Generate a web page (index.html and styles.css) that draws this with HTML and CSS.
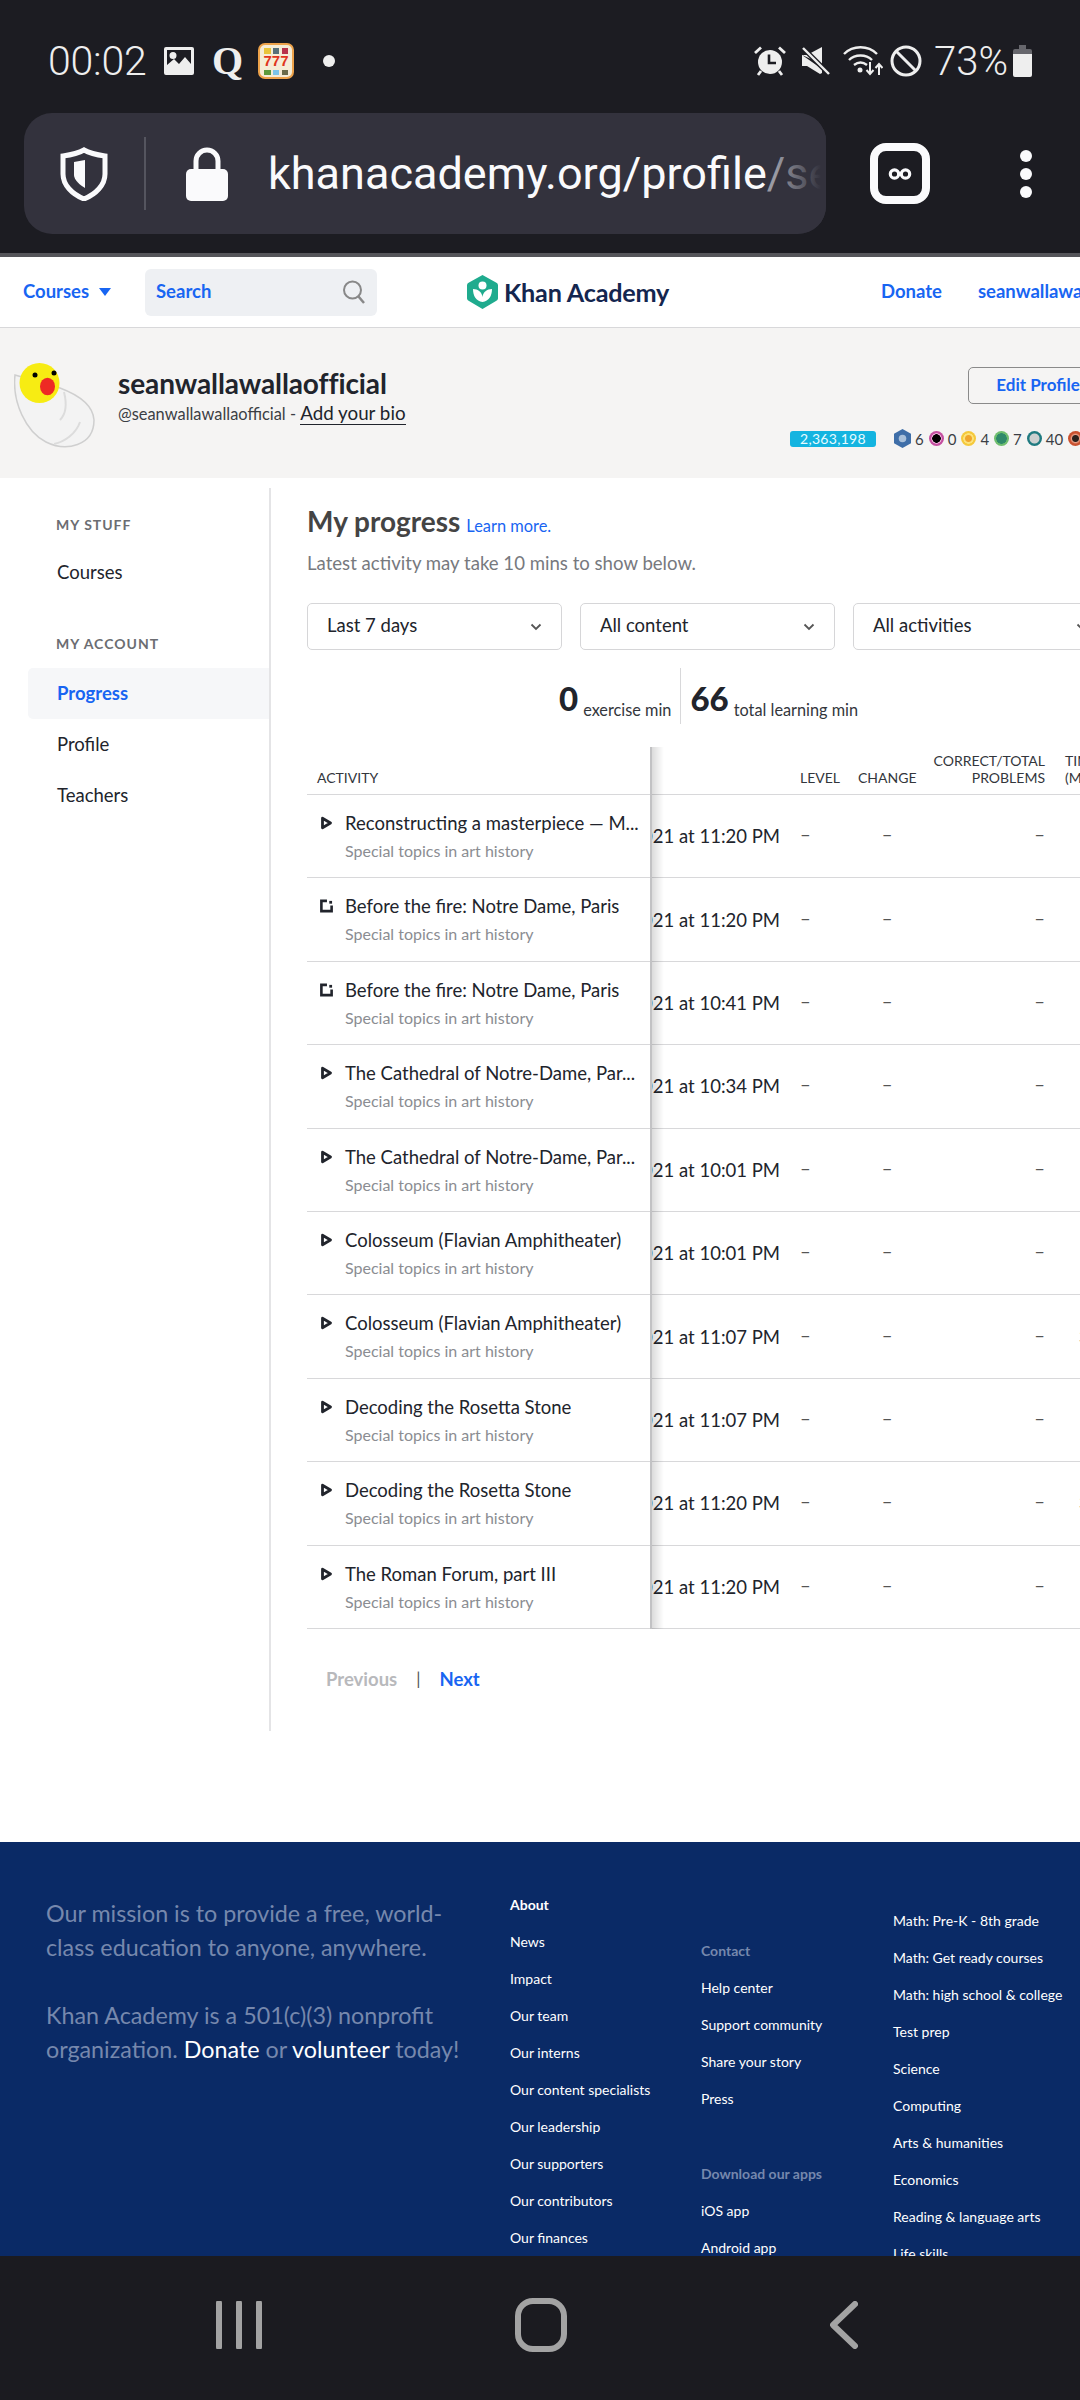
FILE: index.html
```html
<!DOCTYPE html><html lang="en"><head><meta charset="utf-8">
<meta name="viewport" content="width=device-width,initial-scale=1">
<title>Khan Academy · My progress</title>
<link rel="stylesheet" href="styles.css">
</head>

<body>
<svg class="sprite" width="0" height="0">
  <symbol id="play" viewBox="0 0 12 14"><path d="M2 2.200 10 7 2 11.800Z" fill="none" stroke="#21242c" stroke-width="2.800" stroke-linejoin="round"/></symbol>
  <symbol id="doc" viewBox="0 0 14 14"><path d="M7.500 1.500H1.500V12.500H12.500V6.500" fill="none" stroke="#21242c" stroke-width="2.800"/><path d="M10 1.500h3V4.500H10Z" fill="#21242c"/></symbol>
  <symbol id="chev" viewBox="0 0 12 8"><path d="M1.500 1.500 6 6l4.500-4.500" fill="none" stroke="#555" stroke-width="1.800"/></symbol>
</svg>

<!-- phone status bar -->
<div class="status">
  <div class="status-left">
    <span class="clock">00:02</span>
    <svg class="ic-photo" viewBox="0 0 30 28"><path fill="#eee" fill-rule="evenodd" d="M2 0H28a2 2 0 0 1 2 2V26a2 2 0 0 1-2 2H2a2 2 0 0 1-2-2V2A2 2 0 0 1 2 0ZM3 3V18L10 12 15 17 21 10 27 17V3ZM9 5a3.500 3.500 0 1 1 0 7 3.500 3.500 0 0 1 0-7Z"/></svg>
    <span class="ic-q">Q</span>
    <svg class="ic-slots" viewBox="0 0 36 36">
      <rect x="1" y="1" width="34" height="34" rx="6" fill="#f5ecd6" stroke="#eda24a" stroke-width="2"/>
      <rect x="6" y="5" width="7" height="6" fill="#e8c43a"/><rect x="15" y="5" width="6" height="6" fill="#56707a"/><rect x="24" y="5" width="6" height="6" fill="#b8324a"/>
      <text x="18" y="23" class="slots-text">777</text>
      <rect x="6" y="27" width="7" height="5" fill="#5c9a3c"/><rect x="15" y="27" width="6" height="5" fill="#7cc4e8"/><rect x="24" y="27" width="6" height="5" fill="#6b6b4a"/>
    </svg>
    <span class="status-dot"></span>
  </div>
  <div class="status-right">
    <svg class="ic-alarm" viewBox="0 0 34 30"><path d="M2 7 8 1.500M32 7 26 1.500M8 25 5 29M26 25l3 4" stroke="#eee" stroke-width="2.800" fill="none"/><circle cx="17" cy="16" r="12" fill="#eee"/><path d="M16 8.500V17H23" stroke="#1c1c22" stroke-width="2.600" fill="none"/></svg>
    <svg class="ic-mute" viewBox="0 0 28 28"><path fill="#eee" d="M0 8H5L20 0V17ZM0 8V19H5L18 27 20 26V22Z"/><path d="M2 2 27 27" stroke="#1c1c22" stroke-width="5"/><path d="M1 1 27 27" stroke="#eee" stroke-width="2.400"/></svg>
    <svg class="ic-wifi" viewBox="0 0 40 32"><g fill="none" stroke="#eee" stroke-width="2.400"><path d="M1 9C10 0 25 0 34 9"/><path d="M6 15c6-6 17-6 23 0"/><path d="M11 20c4-3 9-3 13 0"/></g><circle cx="17" cy="25" r="2.500" fill="#eee"/><path d="M27 17v12M23.500 25l3.500 4 3.500-4M36 30V19M32.500 23l3.500-4 3.500 4" fill="none" stroke="#eee" stroke-width="2"/></svg>
    <svg class="ic-block" viewBox="0 0 32 32"><circle cx="16" cy="16" r="14" fill="none" stroke="#eee" stroke-width="3"/><path d="M6 6 26 26" stroke="#eee" stroke-width="3"/></svg>
    <span class="batt-text">73%</span>
    <svg class="ic-batt" viewBox="0 0 19 32"><path fill="#66666c" d="M6 0h7v4h4a2 2 0 0 1 2 2v6H0V6a2 2 0 0 1 2-2h4Z"/><path fill="#eee" d="M0 9H19V30a2 2 0 0 1-2 2H2a2 2 0 0 1-2-2Z"/></svg>
  </div>
</div>

<!-- browser toolbar -->
<div class="toolbar">
  <div class="urlbar">
    <svg class="ic-shield" viewBox="0 0 48 54"><path d="M24 3C31 7 38 8 45 9V27C45 38 36 47 24 52 12 47 3 38 3 27V9C10 8 17 7 24 3Z" fill="none" stroke="#fafafc" stroke-width="5"/><path d="M25 13 14 15V28C14 33 20 38 25 41Z" fill="#fafafc"/></svg>
    <span class="url-sep"></span>
    <svg class="ic-lock" viewBox="0 0 42 54"><path d="M10 24V14a11 11 0 0 1 22 0V24" fill="none" stroke="#fafafc" stroke-width="5"/><rect y="22" width="42" height="32" rx="5" fill="#fafafc"/></svg>
    <span class="url">khanacademy.org/profile<span class="url-dim">/seanwallawallaofficial/progress</span></span>
  </div>
  <div class="tabs-btn"><svg viewBox="0 0 24 12"><circle cx="6.500" cy="6" r="4.200" fill="none" stroke="#fafafc" stroke-width="3.200"/><circle cx="17.500" cy="6" r="4.200" fill="none" stroke="#fafafc" stroke-width="3.200"/></svg></div>
  <div class="kebab"><i></i><i></i><i></i></div>
</div>

<!-- site header -->
<header class="site-head">
  <a class="head-link courses">Courses <span class="caret"></span></a>
  <div class="search">
    <span>Search</span>
    <svg viewBox="0 0 24 24"><circle cx="10.500" cy="10" r="8.500" fill="none" stroke="#888" stroke-width="2"/><path d="M16.500 16.500 22 23" stroke="#888" stroke-width="2.500"/></svg>
  </div>
  <div class="logo">
    <svg viewBox="0 0 31 34"><path d="M15.500 0 29 7.500a3 3 0 0 1 2 3V23a3 3 0 0 1-2 3L15.500 34 2 26a3 3 0 0 1-2-3V10.500a3 3 0 0 1 2-3Z" fill="#1fab8e"/><circle cx="15.500" cy="10.500" r="4" fill="#fff"/><path d="M6 14c5 0 9 3 9.500 8 .5-5 4.500-8 9.500-8 0 7-3 12-9.500 13C9 26 6 21 6 14Z" fill="#fff"/></svg>
    <span>Khan Academy</span>
  </div>
  <a class="head-link donate">Donate</a>
  <a class="head-link user">seanwallawallaofficial</a>
</header>

<!-- profile banner -->
<section class="banner">
  <svg class="avatar" viewBox="0 0 84 88">
    <path d="M1 13C-2 40 12 70 32 80 52 90 80 84 80 58 79 42 62 32 46 26Z" fill="#f3f3f3" stroke="#cfcfcf" stroke-width="1.500"/>
    <path d="M50 30C54 46 50 54 46 58M66 60C62 72 50 80 40 82" fill="none" stroke="#dcdcdc" stroke-width="2"/>
    <circle cx="25.500" cy="21" r="20" fill="#f7ec13"/>
    <circle cx="21" cy="13" r="2.500"/><circle cx="40" cy="11" r="2.500"/>
    <ellipse cx="33.500" cy="24.500" rx="7.500" ry="8.700" fill="#ee2a24"/>
  </svg>
  <div class="who">
    <div class="who-name">seanwallawallaofficial</div>
    <div class="who-sub">@seanwallawallaofficial - <a>Add your bio</a></div>
  </div>
  <div class="who-right">
    <a class="edit-btn">Edit Profile</a>
    <div class="stats-line">
      <span class="points">2,363,198</span>
      <svg class="badge-first" viewBox="0 0 18 20"><path d="M9 0 18 5V15L9 20 0 15V5Z" fill="#3f6ea8"/><circle cx="9" cy="10" r="4" fill="#a9c0da"/></svg><span class="badge-n">6</span>
      <span class="badge b-pink"></span><span class="badge-n">0</span>
      <span class="badge b-sun"></span><span class="badge-n">4</span>
      <span class="badge b-earth"></span><span class="badge-n">7</span>
      <span class="badge b-moon"></span><span class="badge-n">40</span>
      <span class="badge b-red"></span>
    </div>
  </div>
</section>

<div class="main">
  <nav class="side">
    <h4>MY STUFF</h4>
    <a class="side-link">Courses</a>
    <h4 class="second">MY ACCOUNT</h4>
    <a class="side-link on">Progress</a>
    <a class="side-link">Profile</a>
    <a class="side-link">Teachers</a>
  </nav>

  <div class="content">
    <div class="title-line"><h2>My progress</h2> <a>Learn more.</a></div>
    <p class="hint">Latest activity may take 10 mins to show below.</p>

    <div class="filters">
      <div class="select"><span>Last 7 days</span> <svg><use href="#chev"/></svg></div>
      <div class="select"><span>All content</span> <svg><use href="#chev"/></svg></div>
      <div class="select"><span>All activities</span> <svg><use href="#chev"/></svg></div>
    </div>

    <div class="totals">
      <div class="total left"><b>0</b><span>exercise min</span></div>
      <div class="total"><b>66</b><span>total learning min</span></div>
    </div>

    <div class="table">
      <div class="row head">
        <div class="c-name">ACTIVITY</div>
        <div class="c-date"></div>
        <div class="c-level">LEVEL</div>
        <div class="c-change">CHANGE</div>
        <div class="c-correct">CORRECT/TOTAL<br>PROBLEMS</div>
        <div class="c-time">TIME<br>(MIN)</div>
      </div>
      <div id="rows"></div>
    </div>

    <div class="pager"><span class="prev">Previous</span><span class="bar">|</span><a>Next</a></div>
  </div>
</div>

<footer class="foot">
  <div class="mission">
    <p>Our mission is to provide a free, world-class education to anyone, anywhere.</p>
    <p>Khan Academy is a 501(c)(3) nonprofit organization. <a>Donate</a> or <a>volunteer</a> today!</p>
  </div>
  <div class="foot-col col-a">
    <b>About</b><a>News</a><a>Impact</a><a>Our team</a><a>Our interns</a><a>Our content specialists</a><a>Our leadership</a><a>Our supporters</a><a>Our contributors</a><a>Our finances</a>
  </div>
  <div class="foot-col col-b">
    <span class="dim">Contact</span><a>Help center</a><a>Support community</a><a>Share your story</a><a>Press</a>
    <span class="dim gap">Download our apps</span><a>iOS app</a><a>Android app</a>
  </div>
  <div class="foot-col col-c">
    <a>Math: Pre-K - 8th grade</a><a>Math: Get ready courses</a><a>Math: high school &amp; college</a><a>Test prep</a><a>Science</a><a>Computing</a><a>Arts &amp; humanities</a><a>Economics</a><a>Reading &amp; language arts</a><a>Life skills</a>
  </div>
</footer>

<!-- phone nav bar -->
<div class="navbar">
  <svg class="nav-recent" viewBox="0 0 46 48"><path d="M3 2V46M23 2V46M43 2V46" stroke="#a3a3a3" stroke-width="6" stroke-linecap="round"/></svg>
  <svg class="nav-home" viewBox="0 0 52 54"><rect x="3" y="3" width="46" height="48" rx="15" fill="none" stroke="#a3a3a3" stroke-width="6"/></svg>
  <svg class="nav-back" viewBox="0 0 28 48"><path d="M25 3 3 24 25 45" fill="none" stroke="#a3a3a3" stroke-width="6" stroke-linecap="round" stroke-linejoin="round"/></svg>
</div>

<script>
// activity rows: [icon, title, date, time]
const ROWS = [
  ['play', 'Reconstructing a masterpiece — M...', 'Jan 3, 2021 at 11:20 PM', ''],
  ['doc',  'Before the fire: Notre Dame, Paris', 'Jan 3, 2021 at 11:20 PM', ''],
  ['doc',  'Before the fire: Notre Dame, Paris', 'Jan 3, 2021 at 10:41 PM', ''],
  ['play', 'The Cathedral of Notre-Dame, Par...', 'Jan 3, 2021 at 10:34 PM', ''],
  ['play', 'The Cathedral of Notre-Dame, Par...', 'Jan 3, 2021 at 10:01 PM', ''],
  ['play', 'Colosseum (Flavian Amphitheater)', 'Jan 3, 2021 at 10:01 PM', ''],
  ['play', 'Colosseum (Flavian Amphitheater)', 'Jan 2, 2021 at 11:07 PM', '3'],
  ['play', 'Decoding the Rosetta Stone', 'Jan 2, 2021 at 11:07 PM', ''],
  ['play', 'Decoding the Rosetta Stone', 'Jan 2, 2021 at 11:20 PM', '3'],
  ['play', 'The Roman Forum, part III', 'Jan 2, 2021 at 11:20 PM', ''],
];

document.getElementById('rows').innerHTML = ROWS.map(r => `
  <div class="row">
    <div class="c-name">
      <svg class="kind"><use href="#${r[0]}"/></svg>
      <div><div class="act">${r[1]}</div><div class="topic">Special topics in art history</div></div>
    </div>
    <div class="c-date"><span>${r[2]}</span></div>
    <div class="c-level">–</div>
    <div class="c-change">–</div>
    <div class="c-correct">–</div>
    <div class="c-time">${r[3]}</div>
  </div>`).join('');
</script>
</body></html>
```

FILE: styles.css
```css
:root{
  --dark:#1c1c22;
  --blue:#1865f2;
  --ink:#21242c;
  --line:#d8d8da;
  --grey:#8b8d92;
}
*{box-sizing:border-box}
html,body{margin:0;padding:0}
body{
  width:1080px;height:2400px;overflow:hidden;display:flex;flex-direction:column;
  font-family:"Lato","Noto Sans",Arial,sans-serif;color:var(--ink);background:#fff;
}
.sprite{position:absolute}
a{color:inherit;text-decoration:none}

/* ---------- status bar ---------- */
.status{
  flex:none;height:112px;background:var(--dark);padding:43px 48px 0 48px;
  display:flex;justify-content:space-between;align-items:flex-start;
  font-family:"Roboto",sans-serif;color:#eee;
}
.status-left,.status-right{display:flex;align-items:center;height:36px}
.clock{font-size:41px;font-weight:300;width:116px;letter-spacing:-.2px}
.ic-photo{width:30px;height:28px}
.ic-q{font-family:"Liberation Serif",serif;font-weight:700;font-size:40px;margin-left:18px;width:30px;line-height:36px}
.ic-slots{width:36px;height:36px;margin-left:16px}
.slots-text{font:700 15px "Liberation Sans",sans-serif;fill:#e0341c;text-anchor:middle}
.status-dot{width:12px;height:12px;border-radius:50%;background:#eee;margin-left:29px}
.ic-alarm{width:34px;height:30px}
.ic-mute{width:28px;height:28px;margin-left:15px}
.ic-wifi{width:40px;height:32px;margin-left:13px}
.ic-block{width:32px;height:32px;margin-left:7px}
.batt-text{font-size:40px;font-weight:300;margin-left:12px;width:71px;white-space:nowrap}
.ic-batt{width:19px;height:32px;margin-left:8px}

/* ---------- browser toolbar ---------- */
.toolbar{
  flex:none;height:145px;background:var(--dark);border-bottom:4px solid #55555a;
  padding:1px 0 0 24px;display:flex;align-items:flex-start;
}
.urlbar{
  flex:none;width:802px;height:121px;border-radius:28px;background:#33323d;position:relative;overflow:hidden;
  display:flex;align-items:center;padding-left:36px;
}
.urlbar::after{
  content:"";position:absolute;right:0;top:0;bottom:0;width:50px;
  background:linear-gradient(90deg,rgba(51,50,61,0),#33323d 90%);
}
.ic-shield{width:48px;height:54px;flex:none}
.url-sep{width:2px;height:73px;background:#55555f;margin-left:36px;flex:none}
.ic-lock{width:42px;height:54px;margin-left:40px;flex:none}
.url{font-family:"Roboto",sans-serif;font-size:45px;color:#fafafc;margin-left:40px;white-space:nowrap}
.url-dim{color:#9a9aa3}
.tabs-btn{
  flex:none;width:60px;height:61px;margin:30px 0 0 44px;border:8px solid #fafafc;border-radius:16px;
  display:flex;align-items:center;justify-content:center;
}
.tabs-btn svg{width:24px;height:12px}
.kebab{flex:none;margin:37px 0 0 90px;display:flex;flex-direction:column;gap:6px}
.kebab i{display:block;width:12px;height:12px;border-radius:50%;background:#fafafc}

/* ---------- site header ---------- */
.site-head{
  flex:none;height:71px;border-bottom:1px solid var(--line);background:#fff;
  display:flex;align-items:center;padding-left:23px;white-space:nowrap;
}
.site-head > *{flex:none}
.head-link{color:var(--blue);font-size:18.500px;font-weight:700;padding-bottom:2px}
.courses{width:122px}
.caret{display:inline-block;width:0;height:0;margin-left:5px;vertical-align:2px;border:6px solid transparent;border-top:8px solid var(--blue);border-bottom:0}
.search{
  width:232px;height:47px;background:#eef0f3;border-radius:6px;padding:0 11px;
  display:flex;align-items:center;justify-content:space-between;color:var(--blue);font-size:18.500px;font-weight:700;
}
.search span{padding-bottom:2px}
.search svg{width:24px;height:24px}
.logo{display:flex;align-items:center;margin-left:90px;width:414px;color:#14264f;font-size:25.200px;font-weight:700;letter-spacing:-.2px}
.logo svg{width:31px;height:34px;margin-right:6px}
.user{margin-left:36px}

/* ---------- profile banner ---------- */
.banner{flex:none;height:150px;background:#f5f4f3;display:flex;position:relative;padding:34px 0 0 14px;white-space:nowrap}
.avatar{width:84px;height:88px;flex:none}
.who{margin-left:20px;padding-top:3px}
.who-name{font-size:28px;font-weight:700;line-height:36px;letter-spacing:-.1px}
.who-sub{font-size:16.400px;line-height:26px;margin-top:-1px;color:#3b3e44}
.who-sub a{font-size:18.800px;color:var(--ink);border-bottom:1px solid var(--ink)}
.who-right{position:absolute;left:790px;top:0;width:320px}
.edit-btn{
  display:flex;align-items:center;justify-content:center;width:140px;height:37px;padding-bottom:2px;
  margin:39px 0 0 178px;border:1.500px solid #8a8a8a;border-radius:5px;color:var(--blue);font-size:17px;font-weight:700;
}
.stats-line{display:flex;align-items:center;margin-top:25px;font-size:15px;color:#3b3e44}
.points{width:86px;height:16px;border-radius:3px;background:#14b4e0;color:#e8fbff;font-size:14px;line-height:16px;text-align:center;letter-spacing:.3px}
.badge-first{width:17px;height:19px;margin-left:18px;flex:none}
.badge-n{margin:0 5px 0 4px}
.badge{width:15px;height:15px;border-radius:50%;flex:none}
.b-pink{background:radial-gradient(circle,#000 0 4px,#e9a9d4 4.500px 5px,#c44fa0 5.500px)}
.b-sun{background:radial-gradient(circle,#f0a52c 0 3px,#fbe27a 4px 5px,#f5c93c 5.500px)}
.b-earth{background:radial-gradient(circle,#2f8a6a 0 5px,#6fbe6e 5.500px)}
.b-moon{background:radial-gradient(circle,#ccd0d0 0 4.500px,#1f7a80 5.500px)}
.b-red{background:radial-gradient(circle,#2b211d 0 3px,#e8a088 4px,#c9512f 5.500px)}

/* ---------- main ---------- */
.main{flex:none;height:1364px;display:flex;padding-top:10px}
.side{width:271px;height:1243px;border-right:2px solid #e4e4e6;padding-top:27px;flex:none}
.side h4{margin:0 0 0 56px;font-size:14px;font-weight:700;letter-spacing:1px;color:#6b6d72;line-height:20px}
.side h4.second{margin-top:36px;margin-bottom:14px}
.side-link{display:block;margin-left:28px;padding-left:29px;font-size:18.500px;height:51px;line-height:51px;color:var(--ink)}
.side h4:first-child + .side-link{margin-top:12px}
.side-link.on{background:#f6f7f9;color:var(--blue);font-weight:700;border-radius:5px 0 0 5px}

.content{flex:none;width:790px;padding-left:36px}
.title-line{display:flex;align-items:baseline;gap:6px;margin-top:15px;height:36px;white-space:nowrap}
.title-line h2{margin:0;font-size:28px;font-weight:700;color:#444;line-height:36px}
.title-line a{font-size:16.400px;color:var(--blue)}
.hint{margin:11px 0 0;font-size:18.600px;line-height:26px;color:#77797e;white-space:nowrap}

.filters{display:flex;gap:18px;margin-top:27px;width:820px}
.select{
  flex:none;width:255px;height:47px;border:1.500px solid #d6d6d8;border-radius:5px;
  display:flex;align-items:center;justify-content:space-between;padding:0 19px;font-size:18.500px;color:var(--ink);white-space:nowrap;
}
.select span{padding-bottom:3px}
.select svg{width:12px;height:8px}

.totals{display:flex;height:56px;margin:18px 0 0 252px;white-space:nowrap}
.total{display:flex;align-items:flex-end;gap:5px;font-size:16.300px;line-height:20px;padding-bottom:4.500px;color:#33363c}
.total b{font-size:33px;font-weight:900;color:var(--ink);line-height:43px}
.total.left{padding-right:9px;border-right:1px solid #d8d8da}
.total:not(.left){padding-left:9px}

.table{margin-top:23px;width:800px;position:relative}
/* frozen first column edge */
.table::after{
  content:"";position:absolute;left:343px;top:0;bottom:0;width:12px;
  border-left:2px solid #c2c2c4;background:linear-gradient(90deg,rgba(0,0,0,.14),rgba(0,0,0,0));
}
.row{
  display:grid;grid-template-columns:344px 129px 60px 76px 129px 62px;
  height:83.400px;border-bottom:1px solid var(--line);align-items:center;font-size:18.500px;
}
.row.head{height:48px;align-items:end;font-size:14px;line-height:17px;padding-bottom:8px;color:#33363c}
.c-name{height:100%;background:#fff;display:flex;padding-left:13px}
.head .c-name{padding-left:10px;align-items:flex-end}
.kind{width:13px;height:14px;margin-top:21px;flex:none}
.act{font-size:18.500px;line-height:26px;margin:15px 0 0 12px;white-space:nowrap}
.topic{font-size:16px;line-height:22px;margin:4px 0 0 12px;color:var(--grey);white-space:nowrap}
.c-date{display:flex;justify-content:flex-end;overflow:hidden;white-space:nowrap}
.c-level{padding-left:20px}
.c-change{padding-left:18px;text-align:center}
.c-correct{text-align:right;white-space:nowrap}
.c-time{padding-left:20px;white-space:nowrap}
.row:not(.head) .c-level,.row:not(.head) .c-change,.row:not(.head) .c-correct{color:#555;margin-top:-4px}
.row:not(.head) .c-time{padding-left:34px}

.pager{display:flex;align-items:center;margin:39px 0 0 19px;font-size:18.500px;white-space:nowrap}
.prev{color:#b8b9bc;font-weight:700}
.bar{margin:0 19px;color:#555;font-size:17px}
.pager a{color:var(--blue);font-weight:700}

/* ---------- footer ---------- */
.foot{flex:none;height:414px;overflow:hidden;background:#0a2a66;display:flex;color:#fff;white-space:nowrap}
.mission{flex:none;width:510px;padding:54px 0 0 46px;white-space:normal;font-size:23.300px;line-height:34px;color:#7688ad}
.mission p{margin:0 0 34px;width:424px}
.mission p + p{width:446px}
.mission a{color:#fff}
.foot-col{display:flex;flex-direction:column;font-size:14px;flex:none}
.foot-col a,.foot-col b,.foot-col span{display:block;line-height:37px;height:37.100px}
.foot-col b{font-weight:700}
.col-a{width:191px;padding-top:44px}
.col-b{width:192px;padding-top:90px}
.col-c{padding-top:60px}
.dim{color:#7688ad;font-weight:700}
.dim.gap{margin-top:38px}

/* ---------- nav bar ---------- */
.navbar{flex:none;height:144px;background:#1b1b20;display:flex;align-items:flex-start;padding:44px 0 0 216px}
.nav-recent{width:46px;height:48px;margin-top:1px}
.nav-home{width:52px;height:54px;margin:-2px 0 0 253px}
.nav-back{width:28px;height:48px;margin:1px 0 0 263px}
```
